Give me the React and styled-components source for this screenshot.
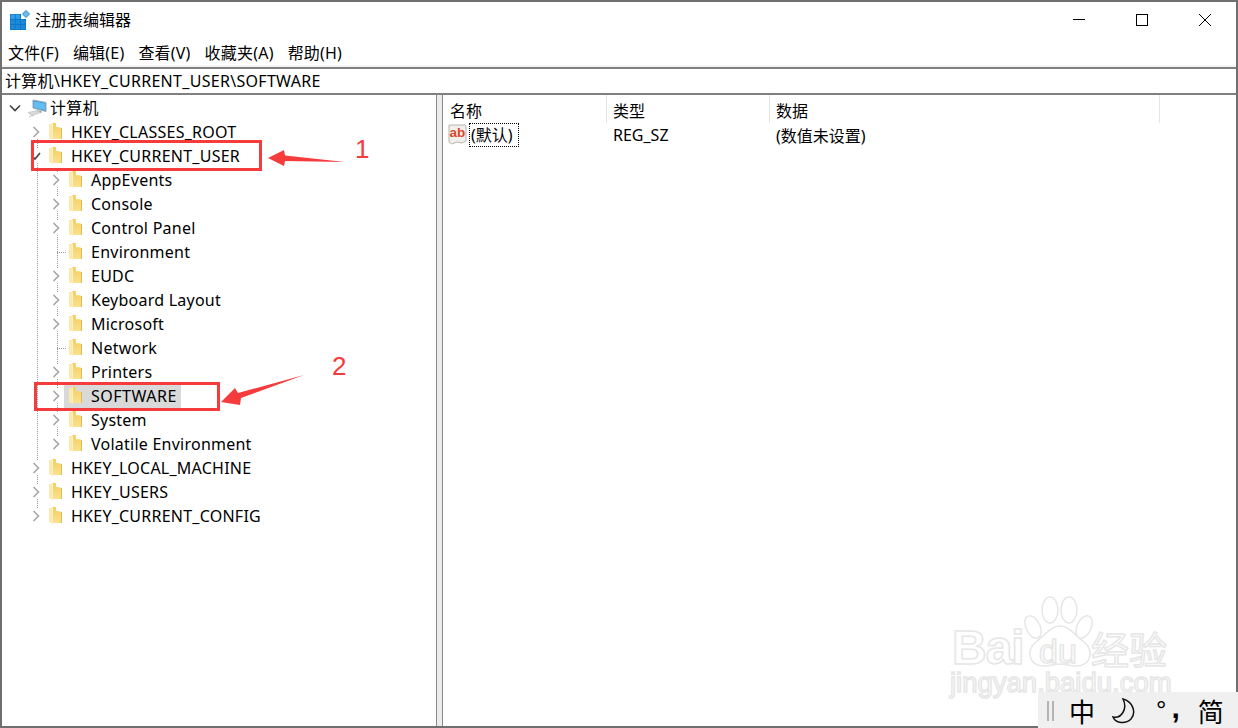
import React from 'react';
import styled, { createGlobalStyle } from 'styled-components';

const GlobalStyle = createGlobalStyle`
  html, body {
    margin: 0;
    padding: 0;
    background: #fff;
    overflow: hidden;
  }
  body {
    font-family: "Noto Sans", "Noto Sans CJK SC", sans-serif;
    font-size: 16px;
    color: #000;
  }
`;

const Page = styled.div`
  position: relative;
  width: 1238px;
  height: 728px;
  overflow: hidden;
`;

const Window = styled.div`
  box-sizing: border-box;
  width: 100%;
  height: 100%;
  border: 2px solid #6f6f6f;
  display: flex;
  flex-direction: column;
`;

const TitleBar = styled.div`
  height: 36px;
  margin-bottom: 4px;
  display: flex;
  align-items: center;
  padding-left: 8px;
`;

const TitleText = styled.span`
  margin-left: 5px;
  flex: 1;
  line-height: 36px;
`;

const Controls = styled.div`
  display: flex;
`;

const ControlButton = styled.div`
  width: 63px;
  height: 36px;
  display: flex;
  align-items: center;
  justify-content: center;
`;

const MenuBar = styled.div`
  height: 23px;
  padding-left: 6px;
  display: flex;
  align-items: center;
  gap: 14px;
  background: #fff;
  border-bottom: 2px solid #f5f5f5;
`;

const MenuItem = styled.span`
  line-height: 23px;
  letter-spacing: 0.2px;
`;

const AddressBar = styled.div`
  box-sizing: border-box;
  height: 28px;
  padding: 0 0 2px 3px;
  display: flex;
  align-items: center;
  letter-spacing: 0.3px;
  border-top: 2px solid #808080;
  border-bottom: 2px solid #808080;
`;

const Panes = styled.div`
  flex: 1;
  display: flex;
  min-height: 0;
`;

const TreePane = styled.div`
  width: 434px;
  padding-top: 1px;
  position: relative;
`;

const Splitter = styled.div`
  box-sizing: border-box;
  width: 7px;
  background: #ececec;
  border-left: 1px solid #8a8a8a;
  border-right: 1px solid #8a8a8a;
`;

const ListPane = styled.div`
  flex: 1;
  position: relative;
`;

const Branch = styled.div`
  position: relative;

  &::before {
    content: '';
    position: absolute;
    left: ${({ $x }) => $x}px;
    top: ${({ $top }) => $top}px;
    bottom: 12px;
    border-left: 1px dotted #9a9a9a;
  }
`;

const Row = styled.div`
  height: 24px;
  padding-left: ${({ $level }) => [7, 28, 48][$level]}px;
  display: flex;
  align-items: center;
`;

const Toggle = styled.div`
  position: relative;
  box-sizing: border-box;
  width: 14px;
  height: 14px;
  padding-right: 2px;
  flex: none;
  display: flex;
  align-items: center;
  justify-content: center;
  background: ${({ $leaf }) => ($leaf ? 'transparent' : '#fff')};

  &::after {
    content: ${({ $leaf }) => ($leaf ? "''" : 'none')};
    position: absolute;
    left: 7px;
    right: -2px;
    top: 7px;
    border-top: 1px dotted #9a9a9a;
  }
`;

const Label = styled.div`
  height: 23px;
  padding: 0 4px 0 5px;
  display: flex;
  align-items: center;
  gap: 2px;
  background: ${({ $selected }) => ($selected ? '#d9d9d9' : 'transparent')};
`;

const IconSlot = styled.span`
  width: 20px;
  display: flex;
  flex: none;
`;

const LabelText = styled.span`
  line-height: 23px;
  white-space: nowrap;
  letter-spacing: ${({ $wide }) => ($wide ? '0.5px' : '0.24px')};
`;

const Columns = styled.div`
  display: grid;
  grid-template-columns: 164px 163px 390px;
`;

const HeaderCell = styled.div`
  box-sizing: border-box;
  height: 28px;
  padding: 2px 0 0 6px;
  display: flex;
  align-items: center;
  border-right: 1px solid #e5e5e5;

  &:first-child {
    padding-left: 7px;
  }
`;

const Cell = styled.div`
  height: 24px;
  padding-left: 6px;
  display: flex;
  align-items: center;
  white-space: nowrap;
`;

const NameCell = styled(Cell)`
  padding-left: 5px;
`;

const FocusedName = styled.span`
  box-sizing: border-box;
  height: 24px;
  width: 50px;
  margin-left: 1px;
  padding-left: 1px;
  line-height: 22px;
  border: 1px dotted #000;
`;

const RedBox = styled.div`
  position: absolute;
  box-sizing: border-box;
  left: ${({ $x }) => $x}px;
  top: ${({ $y }) => $y}px;
  width: ${({ $w }) => $w}px;
  height: ${({ $h }) => $h}px;
  border: 3px solid #f53b3b;
`;

const Callout = styled.span`
  position: absolute;
  left: ${({ $x }) => $x}px;
  top: ${({ $y }) => $y}px;
  font-family: "Liberation Sans", sans-serif;
  font-size: 26px;
  line-height: 26px;
  color: #f53b3b;
`;

const ArrowLayer = styled.svg`
  position: absolute;
  left: 0;
  top: 0;
  pointer-events: none;
`;

const Watermark = styled.div`
  position: absolute;
  left: 950px;
  top: 596px;
  width: 225px;
  height: 110px;
`;

const PawMark = styled.svg`
  position: absolute;
  left: 74px;
  top: 0;
`;

const WatermarkText = styled.span`
  position: absolute;
  left: ${({ $x }) => $x}px;
  top: ${({ $y }) => $y}px;
  font-family: "Liberation Sans", "Noto Sans CJK SC", sans-serif;
  font-size: ${({ $size }) => $size}px;
  font-weight: ${({ $bold }) => ($bold ? 700 : 400)};
  line-height: 1;
  white-space: nowrap;
  color: #fff;
  -webkit-text-stroke: 1.5px #e6e6e6;
  letter-spacing: ${({ $spacing }) => $spacing || 0}px;
`;

const ImeBar = styled.div`
  position: absolute;
  right: 0;
  bottom: 0;
  box-sizing: border-box;
  width: 200px;
  height: 36px;
  padding-top: 1px;
  background: #f0f0f0;
  display: flex;
  align-items: center;
`;

const ImeGrip = styled.div`
  width: 3px;
  height: 20px;
  margin-left: 9px;
  border-left: 2px solid #b4b4b4;
  border-right: 2px solid #b4b4b4;
`;

const ImeGlyph = styled.span`
  font-family: "Noto Sans CJK SC", sans-serif;
  font-size: 26px;
  line-height: 35px;
  margin-left: ${({ $gap }) => $gap}px;
`;

const ImeMoon = styled.svg`
  margin-left: 17px;
`;

const ImePunct = styled.span`
  font-family: "Liberation Sans", sans-serif;
  font-size: ${({ $bold }) => ($bold ? 30 : 26)}px;
  font-weight: ${({ $bold }) => ($bold ? 700 : 400)};
  line-height: 35px;
  margin-top: ${({ $bold }) => ($bold ? -6 : 0)}px;
  margin-left: ${({ $gap }) => $gap}px;
`;

const RegeditIcon = () => (
  <svg width="20" height="22" viewBox="0 0 20 22">
    <rect x="0" y="5" width="16" height="16" fill="#0a76c4" />
    {[0, 1, 2].map((r) =>
      [0, 1, 2].map((c) =>
        r === 0 && c === 2 ? null : (
          <rect
            key={`${r}${c}`}
            x={0.5 + c * 5.2}
            y={5.5 + r * 5.2}
            width="4.4"
            height="4.4"
            fill={r === 0 ? '#2f9fe6' : '#1b8ad8'}
          />
        ),
      ),
    )}
    <rect x="11" y="1" width="9" height="9" fill="#fff" />
    <path d="M16 1.5l3.5 3.5-3.5 3.5-3.5-3.5z" fill="#6cbde8" stroke="#2a86c4" strokeWidth="1" />
  </svg>
);

const ComputerIcon = () => (
  <svg width="20" height="20" viewBox="0 0 20 20">
    <path d="M5 2l13 2.5v9L5 10z" fill="#3f9fdc" stroke="#9aa7b0" strokeWidth="1" />
    <path d="M6 3.5l11 2v6.5L6 9.5z" fill="#62bdf0" />
    <path d="M9 12l5 1.5-1 1.5-4-1z" fill="#9aa1a6" />
    <path d="M0 14.5l9-2 4 2-9 3z" fill="#d7dadd" stroke="#b3b7bb" strokeWidth="0.6" />
    <path d="M1 18.5l5-1" stroke="#c4c7ca" strokeWidth="1" />
  </svg>
);

const FolderIcon = () => (
  <svg width="14" height="18" viewBox="0 0 14 18">
    <defs>
      <linearGradient id="folderFront" x1="0" y1="0" x2="0" y2="1">
        <stop offset="0" stopColor="#f4cf62" />
        <stop offset="1" stopColor="#fbe394" />
      </linearGradient>
    </defs>
    <path d="M0 1h6v15H1l-1-1z" fill="#fce9b2" />
    <path d="M3 0h4v4l5 .5V16H4l-1 1.5z" fill="url(#folderFront)" />
    <path d="M12.5 5v11" stroke="#e3b84f" strokeWidth="1" />
    <path d="M3.5 0.5v16" stroke="#fff0c2" strokeWidth="1" />
  </svg>
);

const Chevron = ({ state }) => {
  if (state === 'down') {
    return (
      <svg width="12" height="8" viewBox="0 0 12 8">
        <path d="M1 1.5l5 5 5-5" fill="none" stroke="#404040" strokeWidth="1.6" />
      </svg>
    );
  }
  if (state === 'open') {
    return (
      <svg width="10" height="8" viewBox="0 0 10 8">
        <path d="M1 4l3 3 5-6" fill="none" stroke="#404040" strokeWidth="1.6" />
      </svg>
    );
  }
  if (state === 'closed') {
    return (
      <svg width="8" height="12" viewBox="0 0 8 12">
        <path d="M1.5 1l5 5-5 5" fill="none" stroke="#a6a6a6" strokeWidth="1.6" />
      </svg>
    );
  }
  return null;
};

const TreeRow = ({ level, state, name, selected, icon }) => (
  <Row $level={level}>
    <Toggle $leaf={state === 'leaf'}>
      <Chevron state={state} />
    </Toggle>
    <Label $selected={selected}>
      <IconSlot>{icon || <FolderIcon />}</IconSlot>
      <LabelText $wide={selected}>{name}</LabelText>
    </Label>
  </Row>
);

const userChildren = [
  ['AppEvents', 'closed'],
  ['Console', 'closed'],
  ['Control Panel', 'closed'],
  ['Environment', 'leaf'],
  ['EUDC', 'closed'],
  ['Keyboard Layout', 'closed'],
  ['Microsoft', 'closed'],
  ['Network', 'leaf'],
  ['Printers', 'closed'],
  ['SOFTWARE', 'closed'],
  ['System', 'closed'],
  ['Volatile Environment', 'closed'],
];

const AbIcon = () => (
  <svg width="20" height="22" viewBox="0 0 20 22">
    <path d="M1 1h16l1 1v15l-4 2-5-1-5 2-3-2z" fill="#f1efec" stroke="#b9b5b0" strokeWidth="1" />
    <text x="1.5" y="13" fontFamily="Liberation Sans, sans-serif" fontWeight="700" fontSize="13.5" fill="#d9482c">
      ab
    </text>
  </svg>
);

export default function App() {
  return (
    <Page>
      <GlobalStyle />
      <Window>
        <TitleBar>
          <RegeditIcon />
          <TitleText>注册表编辑器</TitleText>
          <Controls>
            <ControlButton>
              <svg width="12" height="12" viewBox="0 0 12 12">
                <path d="M0 5.5h12" stroke="#000" strokeWidth="1" />
              </svg>
            </ControlButton>
            <ControlButton>
              <svg width="12" height="12" viewBox="0 0 12 12">
                <rect x="0.5" y="0.5" width="11" height="11" fill="none" stroke="#000" strokeWidth="1" />
              </svg>
            </ControlButton>
            <ControlButton>
              <svg width="12" height="12" viewBox="0 0 12 12">
                <path d="M0 0l12 12M12 0L0 12" stroke="#000" strokeWidth="1" />
              </svg>
            </ControlButton>
          </Controls>
        </TitleBar>
        <MenuBar>
          <MenuItem>文件(F)</MenuItem>
          <MenuItem>编辑(E)</MenuItem>
          <MenuItem>查看(V)</MenuItem>
          <MenuItem>收藏夹(A)</MenuItem>
          <MenuItem>帮助(H)</MenuItem>
        </MenuBar>
        <AddressBar>计算机\HKEY_CURRENT_USER\SOFTWARE</AddressBar>
        <Panes>
          <TreePane>
            <TreeRow level={0} state="down" name="计算机" icon={<ComputerIcon />} />
            <Branch $x={35} $top={12}>
              <TreeRow level={1} state="closed" name="HKEY_CLASSES_ROOT" />
              <TreeRow level={1} state="open" name="HKEY_CURRENT_USER" />
              <Branch $x={55} $top={0}>
                {userChildren.map(([name, state]) => (
                  <TreeRow key={name} level={2} state={state} name={name} selected={name === 'SOFTWARE'} />
                ))}
              </Branch>
              <TreeRow level={1} state="closed" name="HKEY_LOCAL_MACHINE" />
              <TreeRow level={1} state="closed" name="HKEY_USERS" />
              <TreeRow level={1} state="closed" name="HKEY_CURRENT_CONFIG" />
            </Branch>
          </TreePane>
          <Splitter />
          <ListPane>
            <Columns>
              <HeaderCell>名称</HeaderCell>
              <HeaderCell>类型</HeaderCell>
              <HeaderCell>数据</HeaderCell>
              <NameCell>
                <AbIcon />
                <FocusedName>(默认)</FocusedName>
              </NameCell>
              <Cell>REG_SZ</Cell>
              <Cell>(数值未设置)</Cell>
            </Columns>
          </ListPane>
        </Panes>
      </Window>

      <RedBox $x={31} $y={140} $w={231} $h={31} />
      <RedBox $x={34} $y={382} $w={186} $h={29} />
      <ArrowLayer width="400" height="420" viewBox="0 0 400 420">
        <path d="M268 158L284 150L285 155.5L345 162L285 161L284 166z" fill="#f53b3b" />
        <path d="M221 402L235 388L238 393L304 375L241 398L240 405z" fill="#f53b3b" />
      </ArrowLayer>
      <Callout $x={355} $y={136}>1</Callout>
      <Callout $x={332} $y={353}>2</Callout>

      <Watermark>
        <WatermarkText $x={2} $y={28} $size={48} $bold $spacing={-1}>Bai</WatermarkText>
        <PawMark width="72" height="74" viewBox="0 0 72 74">
          <g fill="#fff" stroke="#e6e6e6" strokeWidth="1.5">
            <ellipse cx="26" cy="14" rx="8" ry="13" />
            <ellipse cx="45" cy="14" rx="8" ry="13" />
            <ellipse cx="9" cy="31" rx="7" ry="12" transform="rotate(-25 9 31)" />
            <ellipse cx="60" cy="31" rx="7" ry="12" transform="rotate(25 60 31)" />
            <path d="M36 30c10 0 14 9 24 16c10 7 8 24-8 24c-6 0-10-2-16-2s-10 2-16 2C4 70 2 53 12 46c10-7 14-16 24-16z" />
          </g>
        </PawMark>
        <WatermarkText $x={89} $y={38} $size={34}>du</WatermarkText>
        <WatermarkText $x={141} $y={36} $size={38}>经验</WatermarkText>
        <WatermarkText $x={0} $y={73} $size={27.5}>jingyan.baidu.com</WatermarkText>
      </Watermark>

      <ImeBar>
        <ImeGrip />
        <ImeGlyph $gap={15}>中</ImeGlyph>
        <ImeMoon width="26" height="26" viewBox="0 0 26 26">
          <path d="M11 1c9 2 14 13 8 20-5 5-15 5-18-2 8 2 15-8 10-18z" fill="none" stroke="#111" strokeWidth="1.5" />
        </ImeMoon>
        <ImePunct $gap={18}>°</ImePunct>
        <ImePunct $gap={5} $bold>,</ImePunct>
        <ImeGlyph $gap={18}>简</ImeGlyph>
      </ImeBar>
    </Page>
  );
}
